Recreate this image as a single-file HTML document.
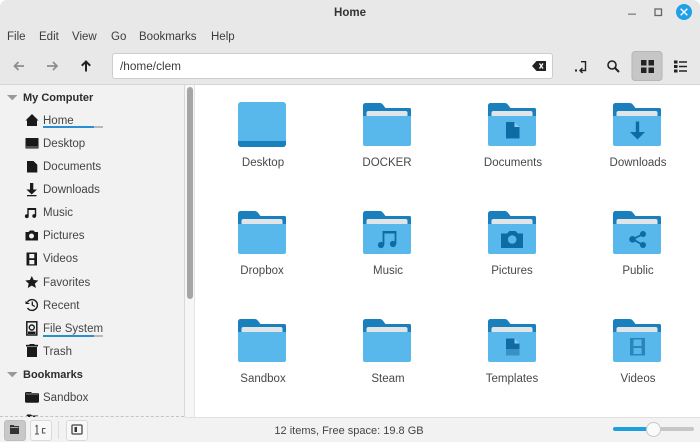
<!DOCTYPE html>
<html><head><meta charset="utf-8"><style>
html,body{margin:0;padding:0;background:#fff}
#w{position:relative;width:700px;height:442px;overflow:hidden;background:#fff;font-family:"Liberation Sans",sans-serif;color:#3a3a3a;font-size:12px}
.a{position:absolute}
.t{position:absolute;white-space:nowrap;line-height:14px}
.m{top:30px;font-size:11.5px;color:#3c3c3c}
.s{left:43px;font-size:11.5px;color:#444;margin-top:1px}
.h{left:23px;font-size:11px;font-weight:bold;color:#2c2c2c;margin-top:1px}
.l{width:100px;text-align:center;font-size:11.5px;color:#484848;margin-top:1px}
svg{position:absolute;overflow:visible}
</style></head><body><div id="w">
<div class="a" style="left:0;top:0;width:700px;height:85px;background:#e8e8e8;border-radius:7px 7px 0 0"></div>
<div class="t" style="left:300px;width:100px;text-align:center;top:6px;font-weight:bold;font-size:11.5px;color:#333">Home</div>
<svg style="left:0;top:0" width="700" height="30">
<rect x="628" y="13.500" width="8" height="1.400" fill="#888"/>
<rect x="655" y="9" width="6.500" height="6.500" fill="none" stroke="#666" stroke-width="1.300"/>
<circle cx="684" cy="12" r="8" fill="#20a0e6"/>
<path d="M680.700 8.700l6.600 6.600M687.300 8.700l-6.600 6.600" stroke="#fff" stroke-width="1.400"/>
</svg>
<div class="t m" style="left:7px">File</div>
<div class="t m" style="left:39px">Edit</div>
<div class="t m" style="left:72px">View</div>
<div class="t m" style="left:111px">Go</div>
<div class="t m" style="left:139px">Bookmarks</div>
<div class="t m" style="left:211px">Help</div>

<svg style="left:0;top:50px" width="700" height="35">
<path d="M24 16H14.500M18.500 12L14.500 16l4 4" fill="none" stroke="#8c8c8c" stroke-width="1.700"/>
<path d="M47 16H57M53 12L57 16l-4 4" fill="none" stroke="#8c8c8c" stroke-width="1.700"/>
<path d="M86 21.500V12M81.800 15.700L86 11.500l4.200 4.200" fill="none" stroke="#222" stroke-width="2"/>
</svg>
<div class="a" style="left:112px;top:53px;width:439px;height:24px;background:#fff;border:1px solid #cdcdcd;border-radius:3px"></div>
<div class="t" style="left:120px;top:59px;font-size:11.8px;color:#3c3c3c">/home/clem</div>
<svg style="left:0;top:0" width="700" height="85">
<path d="M532 66l4.500-5h9.500v10h-9.500z" fill="#222"/>
<path d="M539.500 63.500l3.500 5M543 63.500l-3.500 5" stroke="#fff" stroke-width="1.300"/>
<path d="M581 61.700h4.500v8.800h-5M582.500 68l-2.500 2.500 2.500 2.500" fill="none" stroke="#222" stroke-width="1.400"/>
<rect x="575" y="69.500" width="2" height="2" fill="#222"/>
<circle cx="612" cy="65" r="4" fill="none" stroke="#222" stroke-width="1.600"/>
<path d="M615 68l4 4" stroke="#222" stroke-width="2"/>
<rect x="632" y="51.500" width="30" height="29" rx="3" fill="#c6c6c6" stroke="#b6b6b6"/>
<path d="M641 60h5.500v5.500H641zM648.500 60H654v5.500h-5.500zM641 67.500h5.500V73H641zM648.500 67.500H654V73h-5.500z" fill="#222"/>
<path d="M674 60.500h3.500v3H674zM674 65h3.500v3H674zM674 69.500h3.500v3H674z" fill="#222"/>
<path d="M679 62h8M679 66.500h8M679 71h8" stroke="#222" stroke-width="1.600"/>
</svg>

<div class="a" style="left:0;top:85px;width:184px;height:332px;background:#f2f2f2"></div>
<div class="a" style="left:0;top:84px;width:700px;height:1px;background:#d6d6d6"></div>
<div class="a" style="left:184px;top:85px;width:1px;height:332px;background:#d8d8d8"></div>
<div class="a" style="left:185px;top:85px;width:10px;height:332px;background:#f6f6f6;border-right:1px solid #e4e4e4;box-sizing:border-box"></div>
<div class="a" style="left:187px;top:87px;width:6px;height:212px;background:#a6a6a6;border-radius:3px"></div>

<svg style="left:0;top:0" width="184" height="420">
<path d="M7 95h10.500l-5.250 5.250z" fill="#999"/><path d="M7 372h10.500l-5.250 5.250z" fill="#999"/>
<path d="M25.500 120.500L32 114l6.500 6.500h-1.500v5.500h-10v-5.500z" fill="#1a1a1a"/>
<path d="M25.500 138h13v10.500h-13z" fill="#1a1a1a"/><rect x="26" y="146.500" width="12" height="1" fill="#888"/>
<path d="M27 161h6.500l3.800 3.800V172.500H27z" fill="#1a1a1a"/>
<path d="M30 183h3.300v6.500H37L31.700 194.500l-5.300-5H30z" fill="#1a1a1a"/><rect x="27" y="195" width="9.500" height="1.300" fill="#1a1a1a"/>
<path d="M28 216V209h7.500v7" fill="none" stroke="#1a1a1a" stroke-width="1.400"/><rect x="27.500" y="208" width="8.500" height="2" fill="#1a1a1a"/><circle cx="26.800" cy="216.200" r="1.900" fill="#1a1a1a"/><circle cx="34.200" cy="216" r="1.900" fill="#1a1a1a"/>
<path d="M25.500 232h3l1.500-1.500h3.500l1.500 1.500h3v8.500H25.500z" fill="#1a1a1a"/><circle cx="31.500" cy="236" r="2.500" fill="#f2f2f2"/>
<path d="M26.500 252.500h10.500v13H26.500z" fill="#1a1a1a"/><path d="M29.300 254h5v4.200h-5zM29.300 260h5v4.200h-5z" fill="#f2f2f2"/>
<path d="M31.800 276l1.900 4 4.600.5-3.400 3.100 1 4.400-4.100-2.400-4.100 2.400 1-4.400-3.400-3.100 4.600-.5z" fill="#1a1a1a"/>
<path d="M27.500 302a5.400 5.400 0 1 1 0 6" fill="none" stroke="#1a1a1a" stroke-width="1.400"/><path d="M25.500 301l4.500 3h-4.500z" fill="#1a1a1a"/><path d="M32.300 301.500v3.500l2.500 1.500" fill="none" stroke="#1a1a1a" stroke-width="1.300"/>
<rect x="26.800" y="321.800" width="10" height="13.200" fill="none" stroke="#1a1a1a" stroke-width="1.500"/><circle cx="31.800" cy="327.500" r="2.500" fill="none" stroke="#1a1a1a" stroke-width="1.400"/><rect x="28" y="331.500" width="7.500" height="2.500" fill="#1a1a1a"/>
<rect x="27" y="347" width="10" height="10" fill="#1a1a1a"/><rect x="26" y="344.800" width="12" height="1.700" fill="#1a1a1a"/><rect x="29.500" y="344" width="5" height="1.300" fill="#1a1a1a"/>
<path d="M25 393.500a1.500 1.500 0 0 1 1.500-1.500H31l1 1h5.500a1.500 1.500 0 0 1 1.500 1.500v6.700a1.500 1.500 0 0 1-1.500 1.500h-11a1.500 1.500 0 0 1-1.500-1.500z" fill="#1a1a1a"/><rect x="26" y="393.500" width="12" height="1" fill="#888"/>
<path d="M26 417l1-2.500h4l1 1h6v2z" fill="#1a1a1a"/>
</svg>
<div class="t h" style="top:90px">My Computer</div>
<div class="t s" style="top:113px">Home</div>
<div class="a" style="left:43px;top:126px;width:51px;height:2px;background:#2a8fd0"></div>
<div class="a" style="left:94px;top:126px;width:9px;height:2px;background:#b8b8b8"></div>
<div class="t s" style="top:136px">Desktop</div>
<div class="t s" style="top:159px">Documents</div>
<div class="t s" style="top:182px">Downloads</div>
<div class="t s" style="top:205px">Music</div>
<div class="t s" style="top:228px">Pictures</div>
<div class="t s" style="top:251px">Videos</div>
<div class="t s" style="top:275px">Favorites</div>
<div class="t s" style="top:298px">Recent</div>
<div class="t s" style="top:321px">File System</div>
<div class="a" style="left:43px;top:334.500px;width:51px;height:2px;background:#2a8fd0"></div>
<div class="a" style="left:94px;top:334.500px;width:9px;height:2px;background:#b8b8b8"></div>
<div class="t s" style="top:344px">Trash</div>
<div class="t h" style="top:367px">Bookmarks</div>
<div class="t s" style="top:390px">Sandbox</div>

<svg width="0" height="0" style="position:absolute"><defs>
<g id="f">
<path d="M0 2.500a2.500 2.500 0 0 1 2.500-2.500h14c1.500 0 2.500.500 3.500 1.800L22.500 5h24a1.500 1.500 0 0 1 1.500 1.500V20H0z" fill="#1a80bd"/>
<path d="M3.500 10a2 2 0 0 1 2-2h37a2 2 0 0 1 2 2v4h-41z" fill="#e2e5e7"/>
<path d="M0 13h48v28a2 2 0 0 1-2 2H2a2 2 0 0 1-2-2z" fill="#58b8ec"/>
</g></defs></svg>

<svg style="left:238px;top:102px" width="48" height="46">
<rect width="48" height="45" rx="3" fill="#58b8ec"/>
<path d="M0 39h48v3a3 3 0 0 1-3 3H3a3 3 0 0 1-3-3z" fill="#1a80bd"/>
</svg>
<svg style="left:363px;top:103px" width="48" height="43"><use href="#f"/></svg>
<svg style="left:488px;top:103px" width="48" height="43"><use href="#f"/>
<path d="M18 19h8.500l5 5v11.500H18z" fill="#0f6ba3"/><path d="M26.500 19l5 5h-5z" fill="#8fcdf0"/></svg>
<svg style="left:613px;top:103px" width="48" height="43"><use href="#f"/>
<path d="M22.800 18.500h3.400V29H32l-7.500 7.500L17 29h5.800z" fill="#0f6ba3"/></svg>

<svg style="left:238px;top:211px" width="48" height="43"><use href="#f"/></svg>
<svg style="left:363px;top:211px" width="48" height="43"><use href="#f"/>
<path d="M20.500 34V21.500h12V33" fill="none" stroke="#0f6ba3" stroke-width="1.800"/><rect x="19.600" y="20" width="13.800" height="2.500" fill="#0f6ba3"/><circle cx="18" cy="34" r="3.100" fill="#0f6ba3"/><circle cx="30" cy="33" r="3.100" fill="#0f6ba3"/></svg>
<svg style="left:488px;top:211px" width="48" height="43"><use href="#f"/>
<path d="M13 22.500h6l2.500-2.500h6l2.500 2.500h5V37H13z" fill="#0f6ba3"/><circle cx="24.200" cy="28.500" r="4.300" fill="#58b8ec"/></svg>
<svg style="left:613px;top:211px" width="48" height="43"><use href="#f"/>
<path d="M30 23L19.700 28.300 30 34" fill="none" stroke="#0f6ba3" stroke-width="1.800"/><circle cx="30" cy="23" r="3" fill="#0f6ba3"/><circle cx="19.500" cy="28.300" r="3.300" fill="#0f6ba3"/><circle cx="30" cy="34" r="3" fill="#0f6ba3"/></svg>

<svg style="left:238px;top:319px" width="48" height="43"><use href="#f"/></svg>
<svg style="left:363px;top:319px" width="48" height="43"><use href="#f"/></svg>
<svg style="left:488px;top:319px" width="48" height="43"><use href="#f"/>
<path d="M18 19.500h8.500l5 5v5.500H18z" fill="#0f6ba3"/><rect x="18" y="30" width="13.500" height="6.500" fill="#3a8fc4"/><path d="M26.500 19.500l5 5h-5z" fill="#8fcdf0"/></svg>
<svg style="left:613px;top:319px" width="48" height="43"><use href="#f"/>
<rect x="17" y="19" width="15" height="17.500" fill="#2b85bd"/><path d="M20.500 20.500h8V27h-8zM20.500 29h8v6h-8z" fill="#58b8ec"/></svg>

<div class="t l" style="left:213px;top:155px">Desktop</div>
<div class="t l" style="left:337px;top:155px">DOCKER</div>
<div class="t l" style="left:463px;top:155px">Documents</div>
<div class="t l" style="left:588px;top:155px">Downloads</div>
<div class="t l" style="left:212px;top:263px">Dropbox</div>
<div class="t l" style="left:338px;top:263px">Music</div>
<div class="t l" style="left:462px;top:263px">Pictures</div>
<div class="t l" style="left:588px;top:263px">Public</div>
<div class="t l" style="left:213px;top:371px">Sandbox</div>
<div class="t l" style="left:338px;top:371px">Steam</div>
<div class="t l" style="left:462px;top:371px">Templates</div>
<div class="t l" style="left:588px;top:371px">Videos</div>

<div class="a" style="left:0;top:417px;width:700px;height:25px;background:#f2f2f2"></div>
<div class="a" style="left:185px;top:417px;width:515px;height:1px;background:#e0e0e0"></div>
<div class="a" style="left:0;top:416px;width:184px;height:0;border-top:1px dashed #c4c4c4"></div>
<div class="a" style="left:4px;top:420px;width:20px;height:19px;background:#c8c8c8;border:1px solid #bdbdbd;border-radius:3px"></div>
<div class="a" style="left:30px;top:420px;width:20px;height:19px;background:#f8f8f8;border:1px solid #dadada;border-radius:3px"></div>
<div class="a" style="left:58px;top:421px;width:1px;height:18px;background:#dcdcdc"></div>
<div class="a" style="left:66px;top:420px;width:20px;height:19px;background:#f8f8f8;border:1px solid #dadada;border-radius:3px"></div>
<svg style="left:0;top:417px" width="100" height="25">
<path d="M10 8h3.500l1 1H19v8h-9z" fill="#333"/><rect x="10.500" y="10" width="8" height="1" fill="#aaa"/>
<path d="M37 8v9M35.500 9.500L37 8M35 17h4" fill="none" stroke="#555" stroke-width="1.100"/>
<path d="M45.500 11.500h-3v4.500h3" fill="none" stroke="#555" stroke-width="1.100"/>
<rect x="72" y="8" width="10" height="9" rx="1" fill="none" stroke="#444" stroke-width="1.300"/><rect x="74.500" y="10" width="2.500" height="5" fill="#333"/>
</svg>
<div class="t" style="left:249px;width:200px;text-align:center;top:424px;font-size:11px;color:#444">12 items, Free space: 19.8 GB</div>
<div class="a" style="left:613px;top:427px;width:35px;height:4px;background:#1e9fe0;border-radius:2px"></div>
<div class="a" style="left:648px;top:427px;width:46px;height:4px;background:#c6c6c6;border-radius:2px"></div>
<div class="a" style="left:646px;top:422px;width:13px;height:13px;background:#fafafa;border:1px solid #c8c8c8;border-radius:50%"></div>
</div></body></html>
